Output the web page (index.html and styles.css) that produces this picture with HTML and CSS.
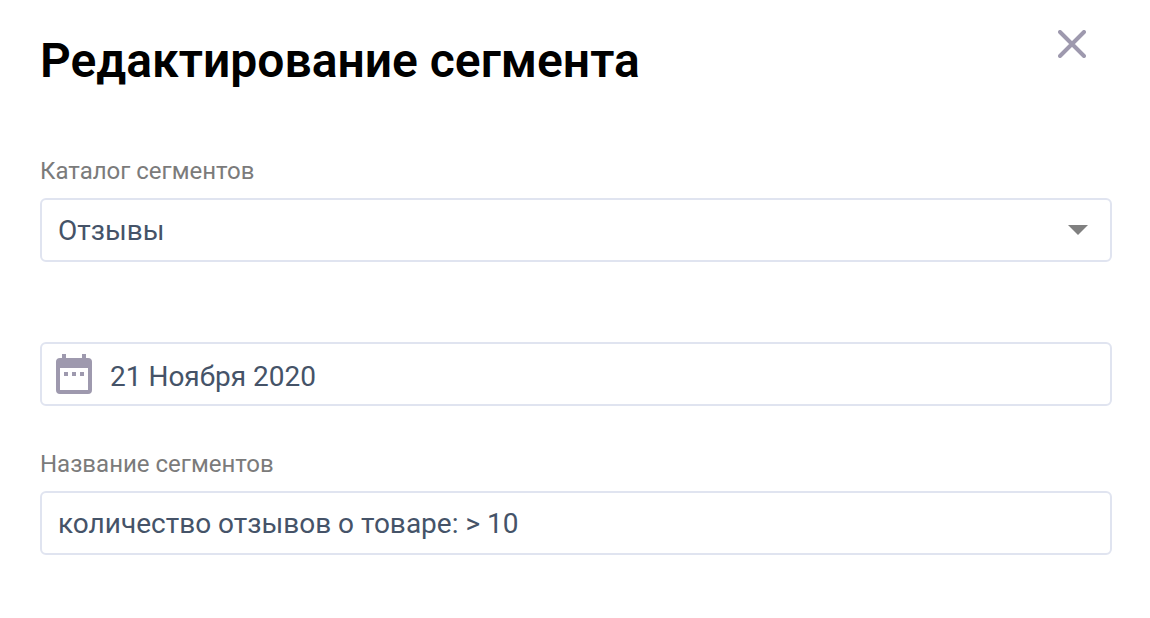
FILE: index.html
```html
<!DOCTYPE html>
<html lang="ru">
<head>
    <meta charset="UTF-8">
    <title>Редактирование сегмента</title>
    <link rel="stylesheet" href="styles.css">
</head>
<body>

<form class="segment-form">
    <div class="header">
        <h1>Редактирование сегмента</h1>
        <button type="button" class="close-btn" aria-label="Закрыть">
            <svg width="28" height="28" viewBox="0 0 28 28">
                <path d="M2 2L26 26M26 2L2 26" stroke="#9e99ae" stroke-width="4" stroke-linecap="round"/>
            </svg>
        </button>
    </div>

    <div class="field">
        <label for="catalog">Каталог сегментов</label>
        <div class="control">
            <select id="catalog">
                <option selected>Отзывы</option>
            </select>
            <svg class="arrow" width="20" height="10" viewBox="0 0 20 10">
                <path d="M0 0H20L10 10Z" fill="#808080"/>
            </svg>
        </div>
    </div>

    <div class="field date-field">
        <div class="control">
            <svg class="calendar" width="36" height="40" viewBox="0 0 36 40">
                <path fill="#9e99ae" fill-rule="evenodd" d="M6 0H10V4H26V0H30V4H32Q36 4 36 8V36Q36 40 32 40H4Q0 40 0 36V8Q0 4 4 4H6ZM4 14V36H32V14Z"/>
                <path fill="#9e99ae" d="M8 18H12V22H8ZM16 18H20V22H16ZM24 18H28V22H24Z"/>
            </svg>
            <input type="text" id="date" aria-label="Дата" value="21 Ноября 2020">
        </div>
    </div>

    <div class="field">
        <label for="name">Название сегментов</label>
        <div class="control">
            <input type="text" id="name" value="количество отзывов о товаре: &gt; 10">
        </div>
    </div>
</form>

</body>
</html>
```
FILE: styles.css
```css
* {
    box-sizing: border-box;
}

body {
    margin: 0;
    background-color: #fff;
    font-family: Roboto, sans-serif;
    color: #455368;
}

.segment-form {
    padding: 30px 38px 20px 40px;
}

.header {
    display: flex;
    justify-content: space-between;
    align-items: flex-start;
    margin-bottom: 64px;
}

h1 {
    margin: 0;
    font-size: 48px;
    line-height: 62px;
    font-weight: 600;
    color: #000;
}

.close-btn {
    display: flex;
    margin-right: 26px;
    padding: 0;
    border: none;
    background: none;
    cursor: pointer;
}

.field {
    margin-bottom: 43px;
}

label {
    display: block;
    margin-bottom: 12px;
    font-size: 24px;
    line-height: 30px;
    color: #7b7b7b;
}

.control {
    display: flex;
    align-items: center;
    height: 64px;
    padding: 0 14px 0 16px;
    border: 2px solid #e0e4f0;
    border-radius: 6px;
}

.control select,
.control input {
    flex: 1;
    min-width: 0;
    height: 100%;
    padding: 0;
    border: none;
    outline: none;
    background: none;
    appearance: none;
    font-family: inherit;
    font-size: 28px;
    color: inherit;
}

.arrow {
    margin-right: 8px;
}

.date-field {
    margin-top: 80px;
}

.date-field .control {
    gap: 18px;
    padding-left: 14px;
}

.date-field input {
    padding-top: 4px;
}
```
